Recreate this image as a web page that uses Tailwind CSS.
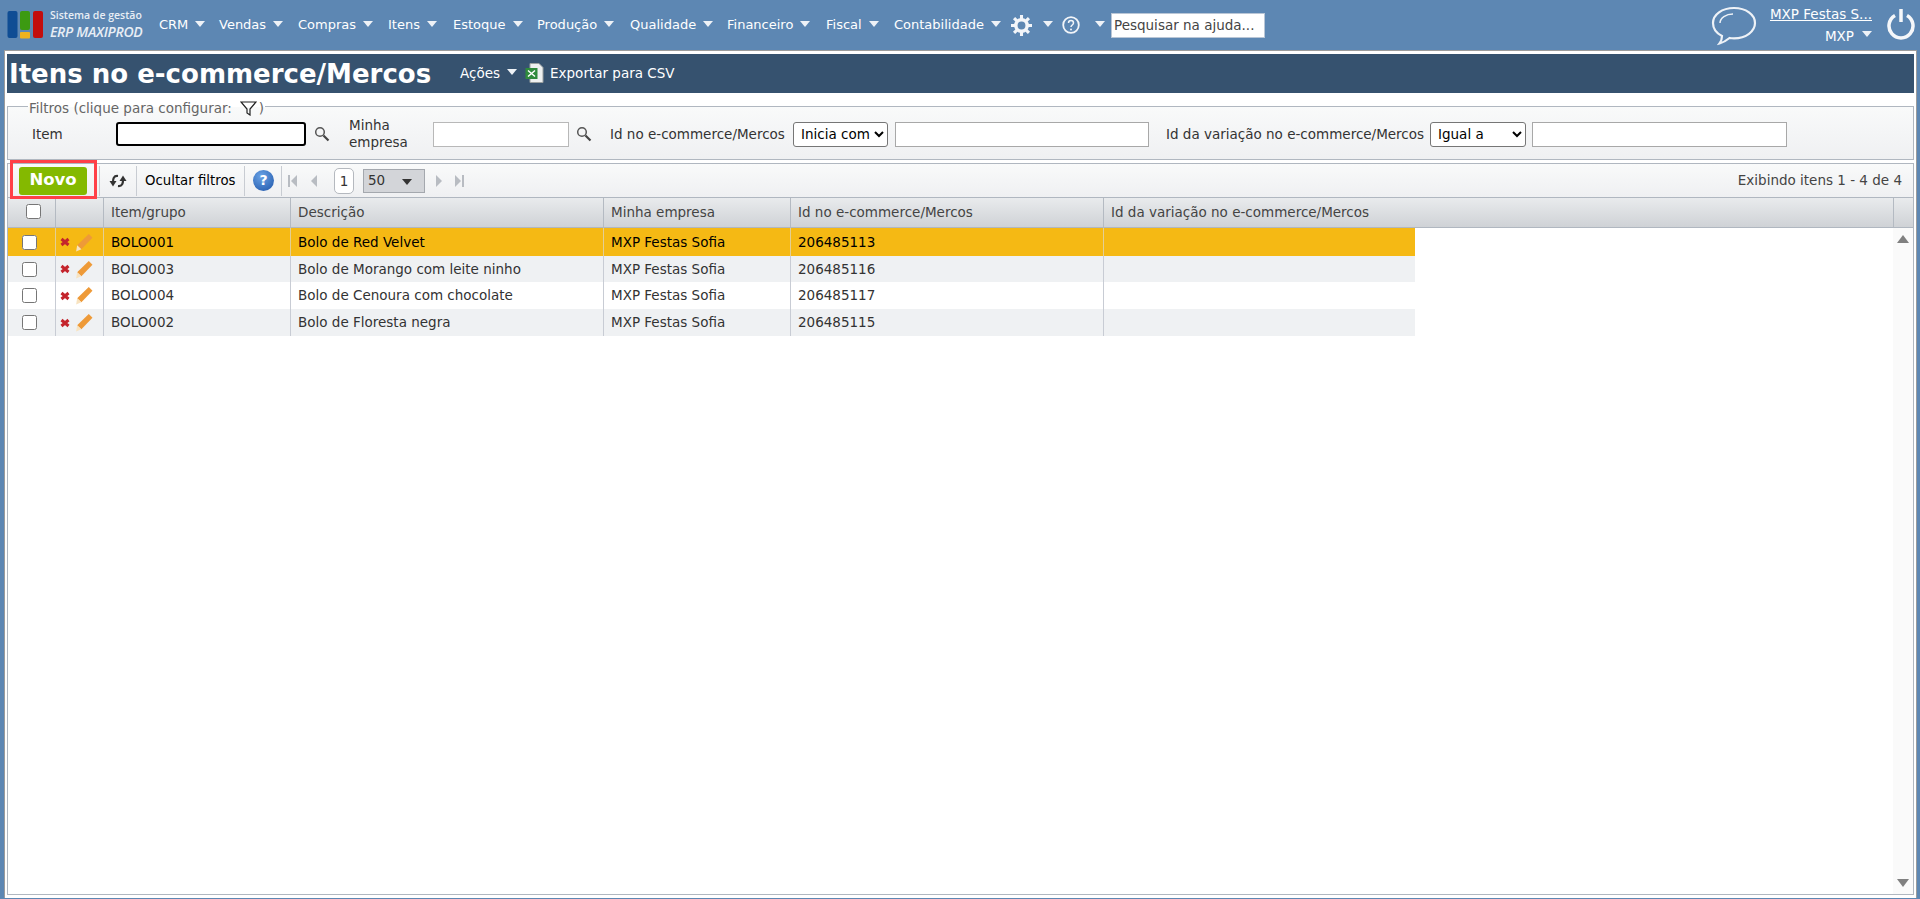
<!DOCTYPE html>
<html lang="pt-BR">
<head>
    <meta charset="UTF-8">
    <title>Itens no e-commerce/Mercos</title>
    <script src="https://cdn.jsdelivr.net/npm/@tailwindcss/browser@4"></script>
</head>
<body class="h-screen overflow-hidden flex flex-col bg-[#5d87b3] font-['DejaVu_Sans',Verdana,sans-serif] text-[13.5px] text-[#333]">
    <!-- Barra de navegacao -->
    <header class="h-[50px] shrink-0 flex items-center text-white relative text-[13px]">
        <div class="w-[159px] shrink-0 flex items-center pl-[7px]">
            <svg width="37" height="28" viewBox="0 0 37 28" class="shrink-0">
                <rect x="0.5" y="0" width="10" height="27" rx="2" fill="#0f4d94"/>
                <rect x="13" y="0" width="10" height="19" rx="2" fill="#3c9a12"/>
                <rect x="13" y="21" width="10" height="6.500" rx="1" fill="#eeb21d"/>
                <rect x="26" y="0" width="10" height="27" rx="2" fill="#c30d0d"/>
            </svg>
            <div class="ml-[6px] mb-px flex flex-col leading-none text-[#e8eef5] font-['Open_Sans',sans-serif]">
                <span class="text-[10.500px] font-semibold">Sistema de gestão</span>
                <span class="text-[14px] italic font-semibold mt-[4px] tracking-[-0.3px]">ERP MAXIPROD</span>
            </div>
        </div>
        <nav class="flex items-center">
            <a class="w-[60px] flex items-center">CRM<span class="ml-[7px] mb-[3px] w-0 h-0 border-x-[5px] border-t-[6px] border-x-transparent border-t-[#eef2f7]"></span></a>
            <a class="w-[79px] flex items-center">Vendas<span class="ml-[7px] mb-[3px] w-0 h-0 border-x-[5px] border-t-[6px] border-x-transparent border-t-[#eef2f7]"></span></a>
            <a class="w-[90px] flex items-center">Compras<span class="ml-[7px] mb-[3px] w-0 h-0 border-x-[5px] border-t-[6px] border-x-transparent border-t-[#eef2f7]"></span></a>
            <a class="w-[65px] flex items-center">Itens<span class="ml-[7px] mb-[3px] w-0 h-0 border-x-[5px] border-t-[6px] border-x-transparent border-t-[#eef2f7]"></span></a>
            <a class="w-[84px] flex items-center">Estoque<span class="ml-[7px] mb-[3px] w-0 h-0 border-x-[5px] border-t-[6px] border-x-transparent border-t-[#eef2f7]"></span></a>
            <a class="w-[93px] flex items-center">Produção<span class="ml-[7px] mb-[3px] w-0 h-0 border-x-[5px] border-t-[6px] border-x-transparent border-t-[#eef2f7]"></span></a>
            <a class="w-[97px] flex items-center">Qualidade<span class="ml-[7px] mb-[3px] w-0 h-0 border-x-[5px] border-t-[6px] border-x-transparent border-t-[#eef2f7]"></span></a>
            <a class="w-[99px] flex items-center">Financeiro<span class="ml-[7px] mb-[3px] w-0 h-0 border-x-[5px] border-t-[6px] border-x-transparent border-t-[#eef2f7]"></span></a>
            <a class="w-[68px] flex items-center">Fiscal<span class="ml-[7px] mb-[3px] w-0 h-0 border-x-[5px] border-t-[6px] border-x-transparent border-t-[#eef2f7]"></span></a>
            <a class="w-[117px] flex items-center">Contabilidade<span class="ml-[7px] mb-[3px] w-0 h-0 border-x-[5px] border-t-[6px] border-x-transparent border-t-[#eef2f7]"></span></a>
        </nav>
        <div class="w-[51px] flex items-center">
            <svg width="21" height="21" viewBox="0 0 24 24" fill="none" stroke="#f2f5f9" stroke-width="4">
                <circle cx="12" cy="12" r="6.500"/>
                <path stroke-width="3.500" d="M12 0v5M12 19v5M0 12h5M19 12h5M3.500 3.500l3.500 3.500M17 17l3.500 3.500M3.500 20.500L7 17M17 7l3.500-3.500"/>
            </svg>
            <span class="ml-[11px] mb-[3px] w-0 h-0 border-x-[5px] border-t-[6px] border-x-transparent border-t-[#eef2f7]"></span>
        </div>
        <div class="w-[49px] flex items-center">
            <svg width="18" height="18" viewBox="0 0 18 18" fill="none">
                <circle cx="9" cy="9" r="7.800" stroke="#f2f5f9" stroke-width="1.800"/>
                <path d="M6.500 7c0-3.300 5-3.300 5 0 0 2-2.500 2-2.500 4" stroke="#f2f5f9" stroke-width="1.500"/>
                <circle cx="9" cy="13.500" r="1" fill="#f2f5f9"/>
            </svg>
            <span class="ml-[15px] mb-[3px] w-0 h-0 border-x-[5px] border-t-[6px] border-x-transparent border-t-[#eef2f7]"></span>
        </div>
        <input class="w-[154px] h-[25px] bg-white border border-[#b9c6d6] px-[2px] text-[13.500px] text-[#333] placeholder:text-[#444] outline-none" placeholder="Pesquisar na ajuda...">
        <div class="ml-auto flex items-center text-[13.500px]">
            <svg width="46" height="40" viewBox="0 0 46 40" fill="none" class="mt-[2px]">
                <path d="M23 2C11 2 2 8.500 2 17c0 6 4 10.500 9 13 0 3-1 5.500-2.500 7.500 4-1 7-3 10-5.500 1.500.2 3 .3 4.500.3 12 0 21-7 21-15.300S35 2 23 2z" stroke="#eef2f7" stroke-width="2.200"/>
                <path d="M9 17c0-5 6-9 13-9" stroke="#eef2f7" stroke-width="1.500"/>
            </svg>
            <div class="ml-[11px] w-[104px] flex flex-col items-end">
                <a class="underline whitespace-nowrap">MXP Festas S...</a>
                <div class="flex items-center mt-px">MXP<span class="ml-[8px] mb-[3px] w-0 h-0 border-x-[5px] border-t-[6px] border-x-transparent border-t-[#eef2f7]"></span></div>
            </div>
            <svg width="28" height="32" viewBox="0 0 28 32" fill="none" stroke="#f5f7fa" class="ml-[15px] mr-[5px] mb-[3px]">
                <path d="M8 7.500a12 12 0 1 0 12 0" stroke-width="3.500"/>
                <path d="M14 1v13" stroke-width="3.500"/>
            </svg>
        </div>
    </header>

    <!-- Painel principal -->
    <main class="flex-1 min-h-0 ml-[4px] mr-[3px] mb-px bg-white border border-[#9c9c9c] border-b-0 px-[2px] pt-[3px] pb-[3px] flex flex-col">
        <div class="h-[39px] shrink-0 bg-[#36526f] flex items-center text-white">
            <h1 class="ml-[2px] w-[451px] text-[26px] font-bold leading-none whitespace-nowrap">Itens no e-commerce/Mercos</h1>
            <a class="flex items-center">Ações<span class="ml-[7px] mb-[3px] w-0 h-0 border-x-[5px] border-t-[6px] border-x-transparent border-t-[#eef2f7]"></span></a>
            <svg width="19" height="20" viewBox="0 0 19 20" class="ml-[8px] mb-[2px]">
                <path d="M5 0.500h9l4 4v15H5z" fill="#eef0f0" stroke="#9aa0a0"/>
                <rect x="0.500" y="5" width="12" height="11" fill="#2f8a3c"/>
                <path d="M3 7.500l7 6M10 7.500l-7 6" stroke="#fff" stroke-width="1.500"/>
            </svg>
            <a class="ml-[6px]">Exportar para CSV</a>
        </div>

        <!-- Filtros -->
        <fieldset class="mt-[6px] shrink-0 h-[61px] border border-[#b0b7c0] bg-linear-to-b from-[#f9fafa] to-[#eff0f2] pl-[24px] flex">
            <legend class="relative top-[2px] ml-[-4px] px-[1px] flex items-center text-[#666] leading-none">
                Filtros (clique para configurar:
                <svg width="17" height="15" viewBox="0 0 17 15" fill="none" stroke="#222" stroke-width="1.200" class="ml-[8px]"><path d="M1 1h15L10 8v6l-3-2V8z"/></svg>
                <span class="ml-[2px]">)</span>
            </legend>
            <div class="flex items-center h-[40px] w-full">
                <label class="w-[84px] text-[#333]">Item</label>
                <input class="w-[190px] h-[24px] border-2 border-black rounded-[3px] bg-white outline-none">
                <svg width="16" height="16" viewBox="0 0 16 16" fill="none" class="ml-[8px]"><circle cx="6" cy="6" r="4.300" stroke="#555" stroke-width="1.500"/><path d="M9.500 9.500l5 5" stroke="#444" stroke-width="2.200"/></svg>
                <label class="ml-[19px] w-[84px] leading-[17px] text-[#333]">Minha empresa</label>
                <input class="w-[136px] h-[25px] border border-[#b8b8b8] bg-white">
                <svg width="16" height="16" viewBox="0 0 16 16" fill="none" class="ml-[7px]"><circle cx="6" cy="6" r="4.300" stroke="#555" stroke-width="1.500"/><path d="M9.500 9.500l5 5" stroke="#444" stroke-width="2.200"/></svg>
                <label class="ml-[18px] w-[183px] whitespace-nowrap text-[#333]">Id no e-commerce/Mercos</label>
                <select class="w-[95px] h-[25px] border border-[#767676] rounded-[3px] bg-white text-[13.500px] text-black pl-[3px]"><option>Inicia com</option></select>
                <input class="ml-[7px] w-[254px] h-[25px] border border-[#a8a8a8] bg-white">
                <label class="ml-[17px] w-[264px] whitespace-nowrap text-[#333]">Id da variação no e-commerce/Mercos</label>
                <select class="w-[96px] h-[25px] border border-[#767676] rounded-[3px] bg-white text-[13.500px] text-black pl-[3px]"><option>Igual a</option></select>
                <input class="ml-[6px] w-[255px] h-[25px] border border-[#a8a8a8] bg-white">
            </div>
        </fieldset>

        <!-- Barra de ferramentas -->
        <div class="mt-[3px] shrink-0 h-[34px] border border-[#b0b7c0] border-b-0 bg-linear-to-b from-[#f9fafa] to-[#eff0f2] flex items-center relative">
            <button class="ml-[11px] w-[68px] h-[28px] rounded-[3px] bg-[#84b900] text-white font-bold text-[16.500px] leading-none">Novo</button>
            <span class="ml-[12px] w-px h-[30px] bg-[#c8ccd2]"></span>
            <svg width="18" height="16" viewBox="0 0 18 16" fill="none" stroke="#333" stroke-width="2.200" class="ml-[9px]">
                <path d="M9 3C4.500 2.500 4 6 4 9"/><path d="M0.500 8h7L4 13.500z" fill="#333" stroke="none"/>
                <path d="M9 13c4.500.5 5-3 5-6"/><path d="M10.500 8h7L14 2.500z" fill="#333" stroke="none"/>
            </svg>
            <span class="ml-[9px] w-px h-[30px] bg-[#c8ccd2]"></span>
            <a class="ml-[8px] w-[91px] text-black whitespace-nowrap text-[13.300px]">Ocultar filtros</a>
            <span class="ml-[8px] w-px h-[30px] bg-[#c8ccd2]"></span>
            <span class="ml-[8px] w-[21px] h-[21px] rounded-full bg-[radial-gradient(circle_at_40%_30%,#6aa3e6,#1d54a8)] text-white font-bold text-[14px] leading-[21px] text-center">?</span>
            <span class="ml-[7px] w-px h-[30px] bg-[#c8ccd2]"></span>
            <svg width="9" height="12" viewBox="0 0 9 12" fill="#b8bcc2" class="ml-[6px]"><rect width="2" height="12"/><path d="M9 0v12L3 6z"/></svg>
            <svg width="8" height="12" viewBox="0 0 8 12" fill="#b8bcc2" class="ml-[13px]"><path d="M7 0v12L1 6z"/></svg>
            <span class="ml-[16px] w-[20px] h-[26px] border border-[#b5b9bf] rounded-[5px] bg-white text-center leading-[24px]">1</span>
            <div class="ml-[9px] w-[62px] h-[24px] bg-[#d3d5d9] border border-[#a4a8ae] pl-[4px] flex items-center">50<span class="ml-[17px] mt-[2px] w-0 h-0 border-x-[5px] border-t-[6px] border-x-transparent border-t-[#333]"></span></div>
            <svg width="8" height="12" viewBox="0 0 8 12" fill="#b8bcc2" class="ml-[10px]"><path d="M1 0v12l6-6z"/></svg>
            <svg width="9" height="12" viewBox="0 0 9 12" fill="#b8bcc2" class="ml-[12px]"><path d="M0 0v12l6-6z"/><rect x="7" width="2" height="12"/></svg>
            <span class="ml-auto mr-[11px] text-[#444]">Exibindo itens 1 - 4 de 4</span>
            <!-- destaque vermelho sobre o botao -->
            <div class="absolute left-[2px] top-[-4px] w-[87px] h-[39px] border-[3px] border-[#ff4048] pointer-events-none"></div>
        </div>

        <!-- Grade -->
        <div class="flex-1 min-h-0 border border-[#b0b7c0] flex flex-col">
            <div class="h-[30px] shrink-0 flex items-stretch bg-linear-to-b from-[#e9ebed] to-[#cfd2d6] border-b border-[#b0b7c0] text-[#444]">
                <div class="w-[48px] flex items-center justify-start pl-[18px] border-r border-[#b4bac2]"><input type="checkbox" class="w-[15px] h-[15px] mb-[2px]"></div>
                <div class="w-[48px] border-r border-[#b4bac2]"></div>
                <div class="w-[187px] pl-[7px] flex items-center border-r border-[#b4bac2]">Item/grupo</div>
                <div class="w-[313px] pl-[7px] flex items-center border-r border-[#b4bac2]">Descrição</div>
                <div class="w-[187px] pl-[7px] flex items-center border-r border-[#b4bac2]">Minha empresa</div>
                <div class="w-[313px] pl-[7px] flex items-center border-r border-[#b4bac2]">Id no e-commerce/Mercos</div>
                <div class="flex-1 pl-[7px] flex items-center border-r border-[#b4bac2]">Id da variação no e-commerce/Mercos</div>
                <div class="w-[19px]"></div>
            </div>
            <div class="flex-1 min-h-0 flex">
                <div class="flex-1">
                    <div class="w-[1407px] h-[28px] flex bg-[#f5b914] text-black">
                        <div class="w-[48px] flex items-center justify-start pl-[14px] border-r border-[#e3cf94]"><input type="checkbox" class="w-[15px] h-[15px]"></div>
                        <div class="w-[48px] flex items-center pl-[4px] gap-[4px] border-r border-[#e3cf94]">
                            <svg width="10" height="10" viewBox="0 0 10 10" stroke="#c4242c" stroke-width="3"><path d="M1.500 2l7 6M8.500 2l-7 6"/></svg>
                            <svg width="19" height="19" viewBox="0 0 18 18"><path d="M14 1l3.500 3.500L7 15.500 3 11.500z" fill="#ee9a38"/><path d="M3 11.500l4 4-5 2z" fill="#f8e3c0"/></svg>
                        </div>
                        <div class="w-[187px] pl-[7px] flex items-center border-r border-[#e3cf94]">BOLO001</div>
                        <div class="w-[313px] pl-[7px] flex items-center border-r border-[#e3cf94]">Bolo de Red Velvet</div>
                        <div class="w-[187px] pl-[7px] flex items-center border-r border-[#e3cf94]">MXP Festas Sofia</div>
                        <div class="w-[313px] pl-[7px] flex items-center border-r border-[#e3cf94]">206485113</div>
                        <div class="flex-1"></div>
                    </div>
                    <div class="w-[1407px] h-[26px] flex bg-[#eff1f3]">
                        <div class="w-[48px] flex items-center justify-start pl-[14px] border-r border-[#c8ccd4]"><input type="checkbox" class="w-[15px] h-[15px]"></div>
                        <div class="w-[48px] flex items-center pl-[4px] gap-[4px] border-r border-[#c8ccd4]">
                            <svg width="10" height="10" viewBox="0 0 10 10" stroke="#c4242c" stroke-width="3"><path d="M1.500 2l7 6M8.500 2l-7 6"/></svg>
                            <svg width="19" height="19" viewBox="0 0 18 18"><path d="M14 1l3.500 3.500L7 15.500 3 11.500z" fill="#ee9a38"/><path d="M3 11.500l4 4-5 2z" fill="#f8e3c0"/></svg>
                        </div>
                        <div class="w-[187px] pl-[7px] flex items-center border-r border-[#c8ccd4]">BOLO003</div>
                        <div class="w-[313px] pl-[7px] flex items-center border-r border-[#c8ccd4]">Bolo de Morango com leite ninho</div>
                        <div class="w-[187px] pl-[7px] flex items-center border-r border-[#c8ccd4]">MXP Festas Sofia</div>
                        <div class="w-[313px] pl-[7px] flex items-center border-r border-[#c8ccd4]">206485116</div>
                        <div class="flex-1"></div>
                    </div>
                    <div class="w-[1407px] h-[27px] flex bg-white">
                        <div class="w-[48px] flex items-center justify-start pl-[14px] border-r border-[#c8ccd4]"><input type="checkbox" class="w-[15px] h-[15px]"></div>
                        <div class="w-[48px] flex items-center pl-[4px] gap-[4px] border-r border-[#c8ccd4]">
                            <svg width="10" height="10" viewBox="0 0 10 10" stroke="#c4242c" stroke-width="3"><path d="M1.500 2l7 6M8.500 2l-7 6"/></svg>
                            <svg width="19" height="19" viewBox="0 0 18 18"><path d="M14 1l3.500 3.500L7 15.500 3 11.500z" fill="#ee9a38"/><path d="M3 11.500l4 4-5 2z" fill="#f8e3c0"/></svg>
                        </div>
                        <div class="w-[187px] pl-[7px] flex items-center border-r border-[#c8ccd4]">BOLO004</div>
                        <div class="w-[313px] pl-[7px] flex items-center border-r border-[#c8ccd4]">Bolo de Cenoura com chocolate</div>
                        <div class="w-[187px] pl-[7px] flex items-center border-r border-[#c8ccd4]">MXP Festas Sofia</div>
                        <div class="w-[313px] pl-[7px] flex items-center border-r border-[#c8ccd4]">206485117</div>
                        <div class="flex-1"></div>
                    </div>
                    <div class="w-[1407px] h-[27px] flex bg-[#eff1f3]">
                        <div class="w-[48px] flex items-center justify-start pl-[14px] border-r border-[#c8ccd4]"><input type="checkbox" class="w-[15px] h-[15px]"></div>
                        <div class="w-[48px] flex items-center pl-[4px] gap-[4px] border-r border-[#c8ccd4]">
                            <svg width="10" height="10" viewBox="0 0 10 10" stroke="#c4242c" stroke-width="3"><path d="M1.500 2l7 6M8.500 2l-7 6"/></svg>
                            <svg width="19" height="19" viewBox="0 0 18 18"><path d="M14 1l3.500 3.500L7 15.500 3 11.500z" fill="#ee9a38"/><path d="M3 11.500l4 4-5 2z" fill="#f8e3c0"/></svg>
                        </div>
                        <div class="w-[187px] pl-[7px] flex items-center border-r border-[#c8ccd4]">BOLO002</div>
                        <div class="w-[313px] pl-[7px] flex items-center border-r border-[#c8ccd4]">Bolo de Floresta negra</div>
                        <div class="w-[187px] pl-[7px] flex items-center border-r border-[#c8ccd4]">MXP Festas Sofia</div>
                        <div class="w-[313px] pl-[7px] flex items-center border-r border-[#c8ccd4]">206485115</div>
                        <div class="flex-1"></div>
                    </div>
                </div>
                <!-- Barra de rolagem -->
                <div class="w-[20px] bg-[#fafafa] flex flex-col items-center justify-between py-[7px]">
                    <span class="w-0 h-0 border-x-[6px] border-b-[8px] border-x-transparent border-b-[#808080]"></span>
                    <span class="w-0 h-0 border-x-[6px] border-t-[8px] border-x-transparent border-t-[#808080]"></span>
                </div>
            </div>
        </div>
    </main>
</body>
</html>
